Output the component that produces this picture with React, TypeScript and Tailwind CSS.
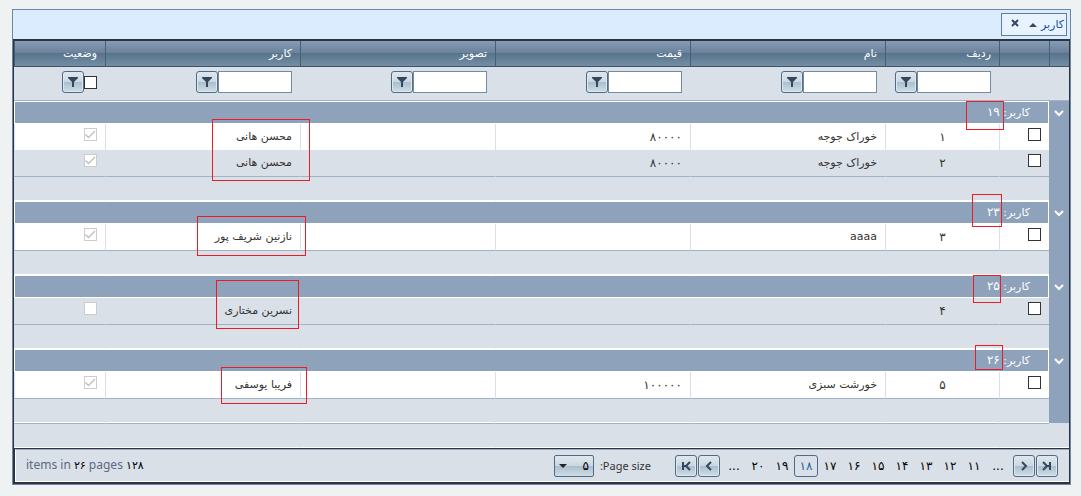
import type { ReactNode } from 'react'

type Item = { id: string; name: string; price: string; user: string; active: boolean; alt?: boolean }
type Group = { code: string; items: Item[] }

const columns = ['ردیف', 'نام', 'قیمت', 'تصویر', 'کاربر']

const groups: Group[] = [
  {
    code: '۱۹',
    items: [
      { id: '۱', name: 'خوراک جوجه', price: '۸۰۰۰۰', user: 'محسن هانی', active: true },
      { id: '۲', name: 'خوراک جوجه', price: '۸۰۰۰۰', user: 'محسن هانی', active: true, alt: true },
    ],
  },
  { code: '۲۳', items: [{ id: '۳', name: 'aaaa', price: '', user: 'نازنین شریف پور', active: true }] },
  { code: '۲۵', items: [{ id: '۴', name: '', price: '', user: 'نسرین مختاری', active: false, alt: true }] },
  { code: '۲۶', items: [{ id: '۵', name: 'خورشت سبزی', price: '۱۰۰۰۰۰', user: 'فریبا یوسفی', active: true }] },
]

const pages = ['...', '۱۱', '۱۲', '۱۳', '۱۴', '۱۵', '۱۶', '۱۷', '۱۸', '۱۹', '۲۰', '...']

// red frames drawn over the group codes and the user names
const marks = [
  'right-[66px] top-[91px] h-[29px] w-[38px]',
  'right-[68px] top-[184px] h-[33px] w-[30px]',
  'right-[69px] top-[265px] h-[28px] w-[28px]',
  'right-[67px] top-[335px] h-[25px] w-[28px]',
  'left-[199px] top-[109px] h-[62px] w-[98px]',
  'left-[184px] top-[206px] h-[40px] w-[109px]',
  'left-[203px] top-[270px] h-[49px] w-[83px]',
  'left-[208px] top-[357px] h-[37px] w-[86px]',
]

const buttonLook =
  'flex size-[22px] shrink-0 items-center justify-center rounded-[3px] border border-[#4f6b88] bg-[linear-gradient(#dfe7ed_0%,#cbd8e1_49%,#a9bdcb_50%,#cfdfe8_100%)] text-[#33475f] shadow-[inset_0_0_0_1px_#dfe7ed]'

function FilterButton({ label }: { label: string }) {
  return (
    <button type="button" aria-label={label} className={buttonLook}>
      <svg width="10" height="10" viewBox="0 0 10 10" fill="currentColor">
        <path d="M0 0h10v1L6 5v5H4V5L0 1z" />
      </svg>
    </button>
  )
}

function Arrow({ label, children }: { label: string; children: ReactNode }) {
  return (
    <button type="button" aria-label={label} className={buttonLook}>
      <svg width="10" height="10" viewBox="0 0 10 10" fill="none" stroke="currentColor" strokeWidth="2">
        {children}
      </svg>
    </button>
  )
}

function Tick({ label, checked, disabled }: { label: string; checked?: boolean; disabled?: boolean }) {
  return (
    <span className="grid size-[13px] shrink-0">
      <input
        type="checkbox"
        aria-label={label}
        defaultChecked={checked}
        disabled={disabled}
        className="peer col-start-1 row-start-1 size-[13px] appearance-none border border-[#333333] bg-white disabled:border-[#cccccc]"
      />
      <svg
        className="pointer-events-none invisible col-start-1 row-start-1 text-[#333333] peer-checked:visible peer-disabled:text-[#bfbfbf]"
        width="13"
        height="13"
        viewBox="0 0 13 13"
        fill="none"
        stroke="currentColor"
        strokeWidth="1.4"
      >
        <path d="M1.5 6.5l3 3L11 3" />
      </svg>
    </span>
  )
}

function HeadCell({ children }: { children?: ReactNode }) {
  return (
    <th className="h-[26px] border-b border-l border-b-[#3d556c] border-l-[#46607a] px-2 text-right font-normal text-white">
      {children}
    </th>
  )
}

function FooterRow({ last }: { last?: boolean }) {
  return (
    <tr>
      <td className={last ? 'h-[25px] border-b border-b-white' : 'h-[25px] bg-[#8fa2bb]'} />
      {[0, 1, 2, 3, 4, 5, 6].map((i) => (
        <td key={i} className="h-[25px] border-t border-b border-l border-t-[#9fb2c8] border-b-white border-l-[#dae0e7]" />
      ))}
    </tr>
  )
}

function ItemRow({ item }: { item: Item }) {
  const cell = item.alt
    ? 'h-[26px] border-l border-[#dae0e7] bg-[#dae0e7] px-2'
    : 'h-[26px] border-l border-[#dae0e7] bg-white px-2'
  return (
    <tr>
      <td className="bg-[#8fa2bb]" />
      <td className={cell}>
        <div className="flex h-[18px] items-start">
          <Tick label={`انتخاب ${item.id}`} />
        </div>
      </td>
      <td className={`${cell} text-center text-[12px]`}>{item.id}</td>
      <td className={cell}>{item.name}</td>
      <td className={`${cell} text-[12px]`}>{item.price}</td>
      <td className={cell} />
      <td className={cell}>{item.user}</td>
      <td className={cell}>
        <div className="flex h-[18px] items-start">
          <Tick label="وضعیت" checked={item.active} disabled />
        </div>
      </td>
    </tr>
  )
}

function GroupRows({ group }: { group: Group }) {
  return (
    <>
      <tr className="text-white">
        <td className="bg-[#8fa2bb]">
          <button type="button" aria-label="بستن گروه" className="flex h-[21px] w-full items-center justify-center">
            <svg width="10" height="8" viewBox="0 0 10 8" fill="none" stroke="currentColor" strokeWidth="2">
              <path d="M1 2l4 4 4-4" />
            </svg>
          </button>
        </td>
        <td colSpan={7} className="h-[23px] border border-white bg-[#8fa2bb] pr-[18px]">
          کاربر: <span className="text-[12px]">{group.code}</span>
        </td>
      </tr>
      {group.items.map((item) => (
        <ItemRow key={item.id} item={item} />
      ))}
      <FooterRow />
    </>
  )
}

export default function App() {
  return (
    <div className="min-h-screen bg-[#eef2f3] pt-[9px] pr-[10px] pb-[11px] pl-3">
      <div
        dir="rtl"
        className="relative border border-[#6d87a5] font-['DejaVu_Sans','Noto_Sans',sans-serif] text-[11px] leading-4 text-[#333333]"
      >
        <div className="flex h-[29px] items-start bg-[#dcecff] px-[3px] pt-[3px]">
          <div className="flex h-[23px] w-[66px] items-center border border-[#5f7f9f] bg-[#e9f3ff] pr-[2px]">
            <a href="#sort" className="text-[#0b4fa8]">کاربر</a>
            <svg className="mr-1 shrink-0" width="8" height="4" viewBox="0 0 8 4" fill="#33475f">
              <path d="M4 0l4 4H0z" />
            </svg>
            <button type="button" aria-label="حذف گروه" className="mr-[10px] pb-1">
              <svg width="8" height="8" viewBox="0 0 8 8" fill="none" stroke="#33475f" strokeWidth="2">
                <path d="M1 1l6 6M7 1l-6 6" />
              </svg>
            </button>
          </div>
        </div>

        <div className="border-x border-y-2 border-[#2b3440] bg-[#dae0e7]">
          <table className="w-full table-fixed border-separate border-spacing-0 text-right">
            <colgroup>
              <col className="w-5" />
              <col className="w-[50px]" />
              <col className="w-[114px]" />
              <col />
              <col />
              <col />
              <col />
              <col className="w-[91px]" />
            </colgroup>
            <thead>
              <tr className="bg-[linear-gradient(#879db5_0%,#6c829c_45%,#57748c_48%,#7690a6_100%)]">
                <HeadCell />
                <HeadCell />
                {columns.map((c) => (
                  <HeadCell key={c}>{c}</HeadCell>
                ))}
                <HeadCell>وضعیت</HeadCell>
              </tr>
              <tr>
                <td className="h-[34px] border-b border-[#9fb2c8]" />
                <td className="border-b border-[#9fb2c8]" />
                {columns.map((c) => (
                  <td key={c} className="border-b border-[#9fb2c8] px-2">
                    <div className="flex h-[25px] items-start">
                      <input type="text" aria-label={c} className="h-[22px] w-[74px] border border-[#738ba5] bg-white px-1" />
                      <FilterButton label={`فیلتر ${c}`} />
                    </div>
                  </td>
                ))}
                <td className="border-b border-[#9fb2c8] px-2">
                  <div className="flex h-[25px] items-center pb-[3px]">
                    <Tick label="وضعیت" />
                    <FilterButton label="فیلتر وضعیت" />
                  </div>
                </td>
              </tr>
            </thead>
            <tbody>
              {groups.map((g) => (
                <GroupRows key={g.code} group={g} />
              ))}
              <FooterRow last />
            </tbody>
          </table>

          <div className="border-t border-l border-[#2b3440]">
            <div className="flex h-[33px] items-center justify-between border-t border-b border-l border-t-[#9fabb9] border-b-white border-l-white pr-[11px] pl-[10px]">
              <div className="flex items-center">
                <div className="flex gap-px">
                  <Arrow label="آخرین صفحه">
                    <path d="M1 1l4 4-4 4M5 5h3M8 1v8" />
                  </Arrow>
                  <Arrow label="صفحه بعد">
                    <path d="M3 1l4 4-4 4" />
                  </Arrow>
                </div>
                <nav className="mr-[3px] ml-[2px] flex text-[12px] text-black">
                  {pages.map((p, i) => (
                    <a
                      key={i}
                      href="#page"
                      className={
                        p === '۱۸'
                          ? 'flex h-[22px] w-6 items-center justify-center rounded-[3px] border border-[#4f6b88] text-[#1f5fae]'
                          : 'flex h-[22px] w-6 items-center justify-center'
                      }
                    >
                      {p}
                    </a>
                  ))}
                </nav>
                <div className="flex gap-px">
                  <Arrow label="صفحه قبل">
                    <path d="M7 1L3 5l4 4" />
                  </Arrow>
                  <Arrow label="اولین صفحه">
                    <path d="M9 1L5 5l4 4M5 5H2M2 1v8" />
                  </Arrow>
                </div>
                <label htmlFor="size" className="mr-6 ml-[6px] font-['Noto_Sans','DejaVu_Sans',sans-serif] text-[#333333]">
                  Page size:
                </label>
                <div className="relative">
                  <select
                    id="size"
                    className="block h-[22px] w-10 appearance-none rounded-[2px] border border-[#4f6b88] bg-[linear-gradient(#dfe7ed_0%,#cbd8e1_49%,#a9bdcb_50%,#cfdfe8_100%)] pr-1 text-[12px] text-black"
                  >
                    <option>۵</option>
                  </select>
                  <svg className="pointer-events-none absolute top-[9px] left-[5px]" width="8" height="4" viewBox="0 0 8 4" fill="#222222">
                    <path d="M0 0h8L4 4z" />
                  </svg>
                </div>
              </div>
              <div dir="ltr" className="font-['Noto_Sans','DejaVu_Sans',sans-serif] text-[12px] text-[#5a6a85]">
                items in <span className="font-['DejaVu_Sans'] text-[11px] text-black">۲۶</span> pages{' '}
                <span className="font-['DejaVu_Sans'] text-[11px] text-black">۱۲۸</span>
              </div>
            </div>
          </div>
        </div>

        {marks.map((m) => (
          <div key={m} className={`pointer-events-none absolute border border-[#ed1c24] ${m}`} />
        ))}
      </div>
    </div>
  )
}
